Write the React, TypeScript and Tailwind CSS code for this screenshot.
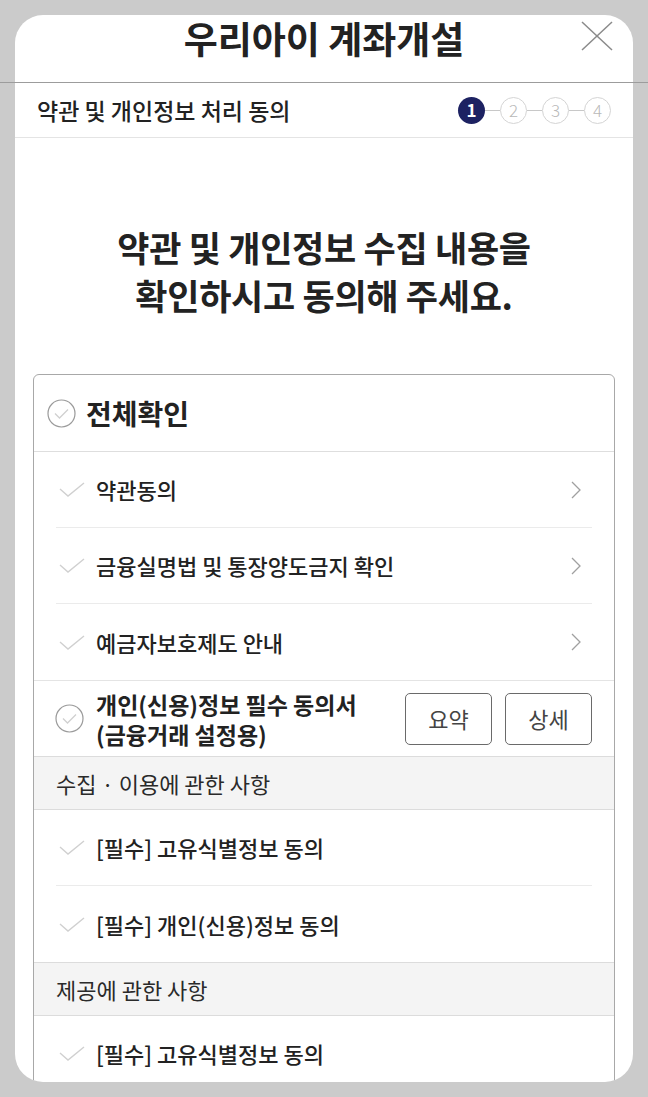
const font = { fontFamily: '"Noto Sans CJK KR", "Noto Sans", sans-serif' }

function Check() {
  return (
    <svg width="26" height="15" viewBox="0 0 26 15" className="shrink-0">
      <polyline points="1,7 9,14 25,1" fill="none" stroke="#d0d0d0" strokeWidth="1.4" />
    </svg>
  )
}

function CircleCheck() {
  return (
    <svg width="29" height="29" viewBox="0 0 29 29" className="shrink-0">
      <circle cx="14.5" cy="14.5" r="13.5" fill="#fff" stroke="#9a9a9a" strokeWidth="1.2" />
      <polyline points="8,14.5 12.5,19 21,10.5" fill="none" stroke="#d0d0d0" strokeWidth="1.3" />
    </svg>
  )
}

function Chevron() {
  return (
    <svg width="12" height="18" viewBox="0 0 12 18" className="shrink-0">
      <polyline points="2,1 10,9 2,17" fill="none" stroke="#a0a0a0" strokeWidth="1.3" />
    </svg>
  )
}

function Steps() {
  return (
    <div className="flex items-center">
      <div className="w-[27px] h-[27px] rounded-full bg-[#1d2262] text-white flex items-center justify-center text-[17px] font-semibold">1</div>
      {[2, 3, 4].map((n) => (
        <div key={n} className="flex items-center">
          <div className="w-[15px] h-px bg-[#c8c8c8]" />
          <div className="w-[27px] h-[27px] rounded-full border border-[#d4d4d4] text-[#b8b8b8] flex items-center justify-center text-[17px] font-light">
            {n}
          </div>
        </div>
      ))}
    </div>
  )
}

function ItemRow({ label, chevron, divider = true }: { label: string; chevron?: boolean; divider?: boolean }) {
  return (
    <div className="px-[22px]">
      <div className={`h-[76px] flex items-center pl-[3px] pr-[10px] ${divider ? "border-b border-[#ebebeb]" : ""}`}>
        <Check />
        <span className="ml-[11px] text-[22px] text-[#222] font-medium flex-1 whitespace-nowrap">{label}</span>
        {chevron && <Chevron />}
      </div>
    </div>
  )
}

function SectionHeader({ label }: { label: string }) {
  return (
    <div className="h-[54px] bg-[#f4f4f4] border-y border-[#dcdcdc] flex items-center px-[22px] text-[22px] text-[#2a2a2a]">
      {label}
    </div>
  )
}

export default function App() {
  return (
    <div className="relative w-[648px] h-[1097px] bg-[#cbcbcb] overflow-hidden pt-[15px]" style={font}>
      <div className="absolute left-0 right-0 top-[82px] h-px bg-[#9c9c9c] z-10" />
      <div className="mx-[15px] h-[1067px] bg-white rounded-[28px] overflow-hidden flex flex-col">
        <div className="relative h-[67px] flex items-start justify-center pt-px">
          <h1 className="text-[37px] leading-[44px] font-bold text-[#222]">우리아이 계좌개설</h1>
          <svg width="32" height="30" viewBox="0 0 32 30" className="absolute right-[20px] top-[6px]">
            <line x1="1" y1="1" x2="31" y2="29" stroke="#8a8a8a" strokeWidth="1.5" />
            <line x1="31" y1="1" x2="1" y2="29" stroke="#8a8a8a" strokeWidth="1.5" />
          </svg>
        </div>
        <div className="h-[55px] mt-px flex items-center justify-between pl-[22px] pr-[22px] border-b border-[#e4e4e4]">
          <span className="text-[23px] font-medium text-[#222] whitespace-nowrap">약관 및 개인정보 처리 동의</span>
          <Steps />
        </div>
        <div className="pt-[85px] text-center text-[35px] leading-[48px] font-bold text-[#222] tracking-[-0.3px]">
          <p>
            약관 및 개인정보 수집 내용을
            <br />
            확인하시고 동의해 주세요.
          </p>
        </div>
        <div className="mx-[18px] mt-[55px] border-[1.5px] border-[#a8a8a8] rounded-[6px] flex-1 mb-[-20px]">
          <div className="h-[77px] flex items-center px-[13px] border-b border-[#dedede]">
            <CircleCheck />
            <span className="ml-[10px] text-[28px] font-bold text-[#222]">전체확인</span>
          </div>
          <ItemRow label="약관동의" chevron />
          <ItemRow label="금융실명법 및 통장양도금지 확인" chevron />
          <ItemRow label="예금자보호제도 안내" chevron divider={false} />
          <div className="h-[76px] border-t border-[#e4e4e4] flex items-center pl-[21px] pr-[22px]">
            <CircleCheck />
            <p className="ml-[12px] flex-1 text-[23px] leading-[30px] font-semibold text-[#222] whitespace-nowrap">
              개인(신용)정보 필수 동의서
              <br />
              (금융거래 설정용)
            </p>
            <div className="flex gap-[13px]">
              <button className="w-[87px] h-[52px] border border-[#6a6a6a] rounded-[5px] text-[22px] text-[#444]">요약</button>
              <button className="w-[87px] h-[52px] border border-[#6a6a6a] rounded-[5px] text-[22px] text-[#444]">상세</button>
            </div>
          </div>
          <SectionHeader label="수집 · 이용에 관한 사항" />
          <ItemRow label="[필수] 고유식별정보 동의" />
          <ItemRow label="[필수] 개인(신용)정보 동의" divider={false} />
          <SectionHeader label="제공에 관한 사항" />
          <ItemRow label="[필수] 고유식별정보 동의" />
        </div>
      </div>
    </div>
  )
}
